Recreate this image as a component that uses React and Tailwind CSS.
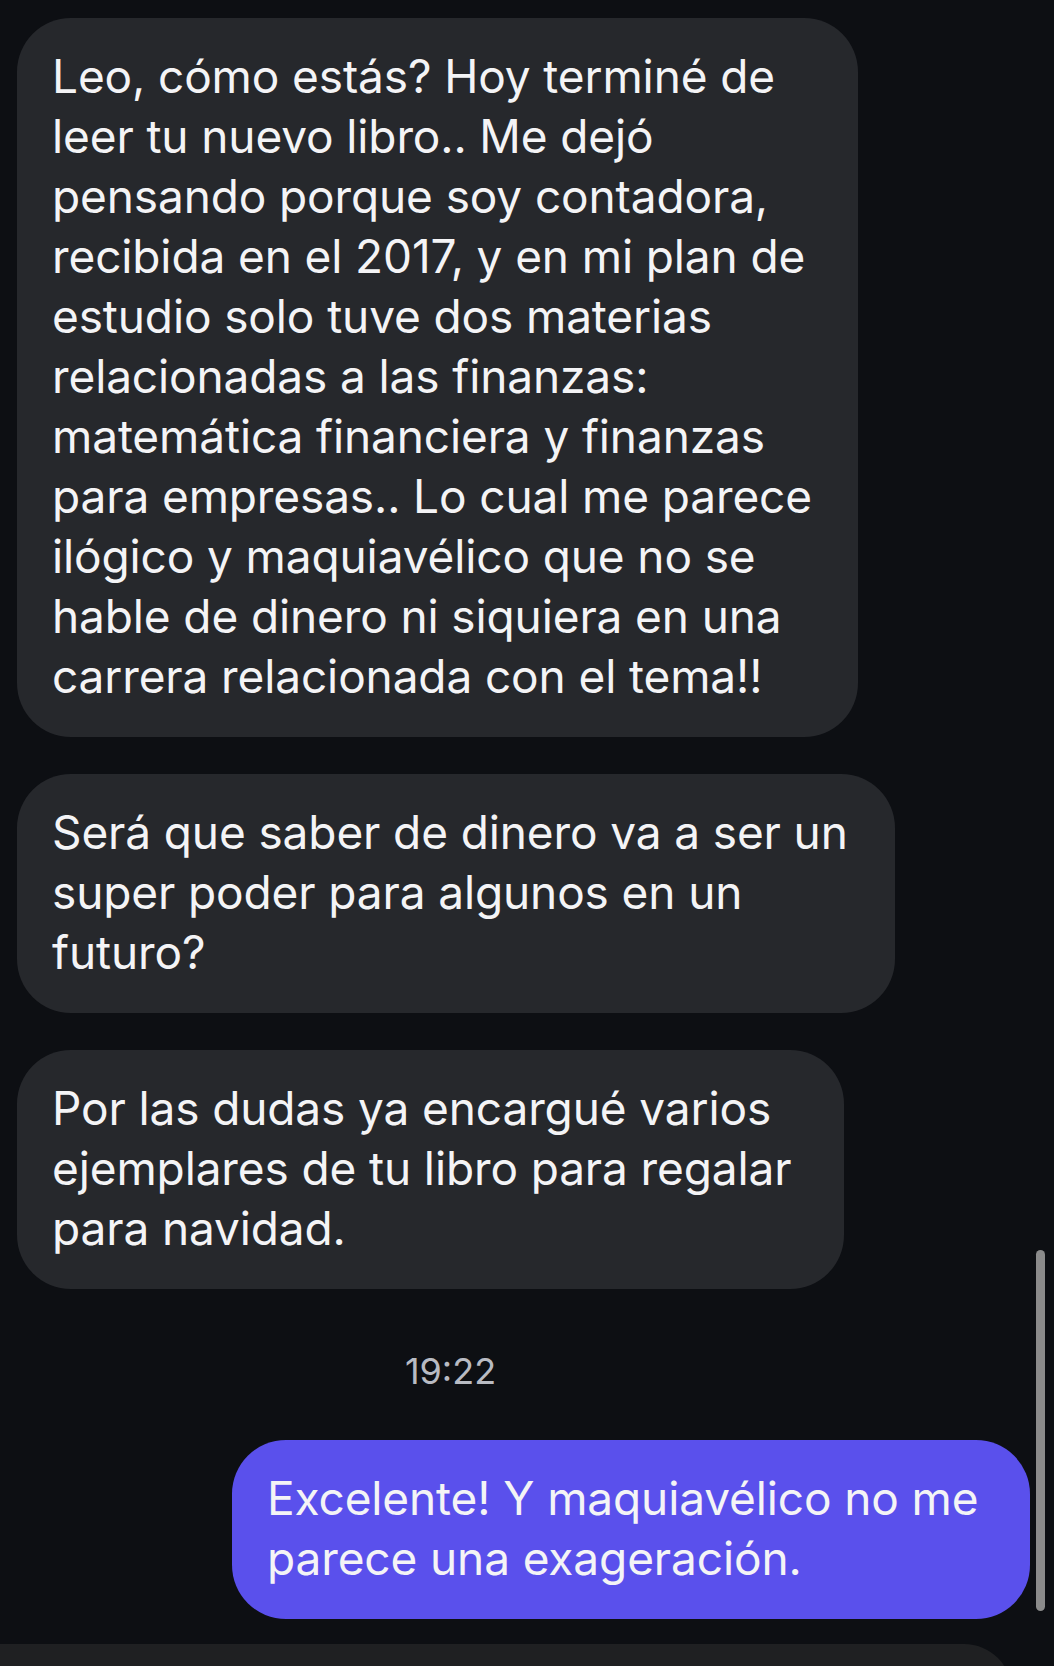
const incoming = [
  {
    w: "w-[841px]",
    lines: [
      "Leo, cómo estás? Hoy terminé de",
      "leer tu nuevo libro.. Me dejó",
      "pensando porque soy contadora,",
      "recibida en el 2017, y en mi plan de",
      "estudio solo tuve dos materias",
      "relacionadas a las finanzas:",
      "matemática financiera y finanzas",
      "para empresas.. Lo cual me parece",
      "ilógico y maquiavélico que no se",
      "hable de dinero ni siquiera en una",
      "carrera relacionada con el tema!!",
    ],
  },
  {
    w: "w-[878px]",
    lines: ["Será que saber de dinero va a ser un", "super poder para algunos en un", "futuro?"],
  },
  {
    w: "w-[827px]",
    lines: ["Por las dudas ya encargué varios", "ejemplares de tu libro para regalar", "para navidad."],
  },
];

function Bubble({ lines, className }) {
  return (
    <div className={`rounded-[54px] pl-[35px] pr-[20px] pt-[28px] pb-[31px] text-[46px] leading-[60px] tracking-[-0.12px] text-[#f4f4f6] ${className}`}>
      {lines.map((l) => (
        <div key={l} className="whitespace-nowrap">
          {l}
        </div>
      ))}
    </div>
  );
}

export default function App() {
  return (
    <div
      className="relative w-[1054px] h-[1666px] overflow-hidden bg-[#0d0f13] flex flex-col pt-[18px]"
      style={{ fontFamily: "Inter, 'Noto Sans', sans-serif" }}
    >
      <div className="flex flex-col gap-[37px] pl-[17px]">
        {incoming.map((m, i) => (
          <Bubble key={i} lines={m.lines} className={`${m.w} bg-[#26282c]`} />
        ))}
      </div>

      <div className="w-[901px] mt-[61px] mb-[48px] text-center text-[36px] leading-[42px] text-[#b8bbc3]">
        19:22
      </div>

      <Bubble
        lines={["Excelente! Y maquiavélico no me", "parece una exageración."]}
        className="self-end mr-[24px] w-[798px] bg-[#5a50ec]"
      />

      {/* input bar peeking at the bottom */}
      <div className="mt-[25px] w-[1012px] h-[60px] shrink-0 bg-[#1f2022] rounded-tr-[48px]" />

      {/* scrollbar */}
      <div className="absolute left-[1036px] top-[1250px] w-[9px] h-[361px] rounded-full bg-[#8b8b8b]" />
    </div>
  );
}
